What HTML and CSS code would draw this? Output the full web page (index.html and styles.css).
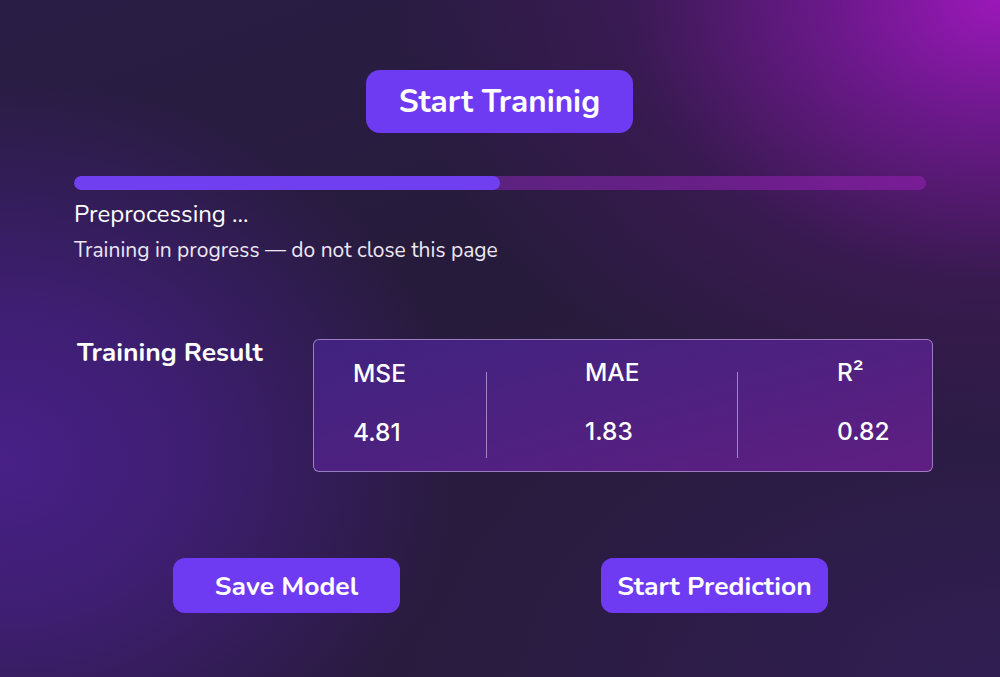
FILE: index.html
```html
<!DOCTYPE html>
<html>
<head>
<meta charset="utf-8">
<link rel="stylesheet" href="styles.css">
</head>
<body>
<main class="page">
  <div class="top">
    <button class="btn btn-large">Start Traninig</button>
  </div>
  <section class="progress">
    <div class="track"><div class="fill" style="width:50%"></div></div>
    <div class="stage">Preprocessing ...</div>
    <div class="note">Training in progress — do not close this page</div>
  </section>
  <section class="result">
    <h2 class="result-title">Training Result</h2>
    <div class="card">
      <div class="col col1"><div class="label">MSE</div><div class="value">4.81</div></div>
      <div class="col col2"><div class="label">MAE</div><div class="value">1.83</div></div>
      <div class="col col3"><div class="label">R²</div><div class="value">0.82</div></div>
    </div>
  </section>
  <div class="actions">
    <button class="btn btn-small save">Save Model</button>
    <button class="btn btn-small predict">Start Prediction</button>
  </div>
</main>
</body>
</html>
```
FILE: styles.css
```css
html, body {
  margin: 0;
  padding: 0;
  width: 1000px;
  height: 677px;
  overflow: hidden;
}
body {
  font-family: "Nunito", "Lato", "Open Sans", sans-serif;
  color: #fff;
  background:
    radial-gradient(ellipse 600px 450px at 1000px 0px, rgba(155, 24, 185, 1) 0%, rgba(135, 24, 170, 0.7) 28%, rgba(95, 24, 125, 0.3) 62%, rgba(60, 20, 90, 0) 100%),
    radial-gradient(ellipse 460px 380px at 0px 460px, rgba(72, 32, 135, 1) 0%, rgba(68, 31, 128, 0.8) 40%, rgba(50, 28, 90, 0) 100%),
    radial-gradient(ellipse 600px 360px at 1000px 677px, rgba(48, 30, 82, 1) 0%, rgba(45, 28, 70, 0) 100%),
    linear-gradient(160deg, #2a1d45 0%, #271b3c 40%, #2a1b3e 100%);
}
.page {
  width: 1000px;
  height: 677px;
  display: flex;
  flex-direction: column;
  box-sizing: border-box;
  padding-top: 70px;
}
.top {
  display: flex;
  justify-content: center;
}
.btn {
  border: none;
  background: #6f3bf2;
  color: #fff;
  font-family: inherit;
  font-weight: 700;
  cursor: pointer;
  box-sizing: border-box;
  padding: 0;
}
.btn-large {
  width: 267px;
  height: 63px;
  border-radius: 14px;
  font-size: 31.5px;
  margin-left: -1px;
}
.progress {
  padding: 0 74px;
  margin-top: 43px;
}
.track {
  height: 14px;
  border-radius: 7px;
  background: linear-gradient(90deg, rgba(110, 50, 170, 0.55), rgba(140, 30, 170, 0.65));
  overflow: hidden;
}
.fill {
  height: 100%;
  border-radius: 7px;
  background: #7040f0;
}
.stage {
  font-size: 24px;
  margin-top: 8px;
  line-height: 32px;
}
.note {
  font-size: 21px;
  margin-top: 7px;
  line-height: 26px;
  color: #ece8f5;
}
.result {
  display: flex;
  align-items: flex-start;
  margin-top: 76px;
  padding-left: 77px;
}
.result-title {
  margin: -3px 0 0 0;
  font-size: 26.5px;
  font-weight: 700;
  line-height: 32px;
  width: 236px;
}
.card {
  width: 620px;
  height: 133px;
  box-sizing: border-box;
  border: 1px solid rgba(220, 200, 240, 0.55);
  border-radius: 6px;
  background: linear-gradient(165deg, #40237f 0%, #4e2180 50%, #5f1e82 100%);
  display: grid;
  grid-template-columns: 172px 251px 197px;
  align-items: start;
  padding-top: 18px;
}
.col {
  height: 86px;
  padding-top: 1px;
  box-sizing: border-box;
}
.col1 { padding-left: 39px; }
.col2 { padding-left: 98px; border-left: 1px solid rgba(220, 200, 240, 0.6); margin-top: 14px; padding-top: 0; }
.col3 { padding-left: 99px; border-left: 1px solid rgba(220, 200, 240, 0.6); margin-top: 14px; padding-top: 0; }
.col2 .label, .col3 .label { margin-top: -14px; }
.label, .value {
  font-family: "Inter", "Lato", sans-serif;
  font-size: 24.5px;
  font-weight: 500;
  line-height: 28px;
}
.value {
  margin-top: 31px;
}
.actions {
  display: flex;
  margin-top: 86px;
  padding-left: 173px;
  gap: 201px;
}
.btn-small {
  width: 227px;
  height: 55px;
  border-radius: 12px;
  font-size: 26.5px;
}
```
